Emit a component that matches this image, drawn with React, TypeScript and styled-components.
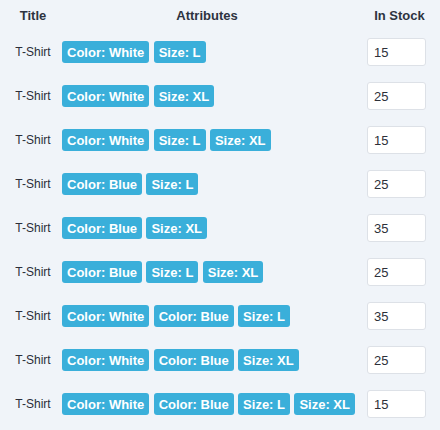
import React from "react";
import styled, { createGlobalStyle } from "styled-components";

const GlobalStyle = createGlobalStyle`
  html, body {
    margin: 0;
    padding: 0;
    background: #f0f4f9;
  }
  body {
    font-family: "Liberation Sans", Arial, sans-serif;
    color: #2d3039;
  }
`;

const Table = styled.div`
  display: grid;
  grid-template-columns: 36px 290px 69px;
  grid-auto-rows: 44px;
  grid-template-rows: 30px;
  column-gap: 11px;
  padding-left: 15px;
`;

const HeadCell = styled.div<{ $pl?: number }>`
  display: flex;
  align-items: center;
  justify-content: center;
  padding-left: ${(p) => p.$pl ?? 0}px;
  font-size: 13px;
  font-weight: bold;
  color: #2d3340;
  white-space: nowrap;
`;

const TitleCell = styled.div`
  display: flex;
  align-items: center;
  justify-content: center;
  font-size: 12px;
  white-space: nowrap;
  color: #2b2e3a;
`;

const AttrCell = styled.div`
  display: flex;
  align-items: center;
  gap: 4.4px;
`;

const Badge = styled.span`
  display: inline-flex;
  align-items: center;
  height: 22px;
  padding: 0 5px;
  border-radius: 3px;
  background: #3aafda;
  color: #ffffff;
  font-size: 13px;
  font-weight: bold;
  white-space: nowrap;
`;

const StockCell = styled.div`
  display: flex;
  align-items: center;
  padding-left: 4px;
`;

const StockInput = styled.input`
  box-sizing: border-box;
  width: 59px;
  height: 28px;
  padding: 0 6px;
  border: 1px solid #dde1e7;
  border-radius: 3px;
  background: #ffffff;
  font-family: "Liberation Sans", Arial, sans-serif;
  font-size: 13px;
  color: #2d3039;
  outline: none;
`;

const rows: { attrs: string[]; stock: number }[] = [
  { attrs: ["Color: White", "Size: L"], stock: 15 },
  { attrs: ["Color: White", "Size: XL"], stock: 25 },
  { attrs: ["Color: White", "Size: L", "Size: XL"], stock: 15 },
  { attrs: ["Color: Blue", "Size: L"], stock: 25 },
  { attrs: ["Color: Blue", "Size: XL"], stock: 35 },
  { attrs: ["Color: Blue", "Size: L", "Size: XL"], stock: 25 },
  { attrs: ["Color: White", "Color: Blue", "Size: L"], stock: 35 },
  { attrs: ["Color: White", "Color: Blue", "Size: XL"], stock: 25 },
  { attrs: ["Color: White", "Color: Blue", "Size: L", "Size: XL"], stock: 15 },
];

export default function App() {
  return (
    <>
      <GlobalStyle />
      <Table>
        <HeadCell>Title</HeadCell>
        <HeadCell>Attributes</HeadCell>
        <HeadCell $pl={4}>In Stock</HeadCell>
        {rows.map((r, i) => (
          <React.Fragment key={i}>
            <TitleCell>T-Shirt</TitleCell>
            <AttrCell>
              {r.attrs.map((a, j) => (
                <Badge key={j}>{a}</Badge>
              ))}
            </AttrCell>
            <StockCell>
              <StockInput defaultValue={String(r.stock)} />
            </StockCell>
          </React.Fragment>
        ))}
      </Table>
    </>
  );
}
